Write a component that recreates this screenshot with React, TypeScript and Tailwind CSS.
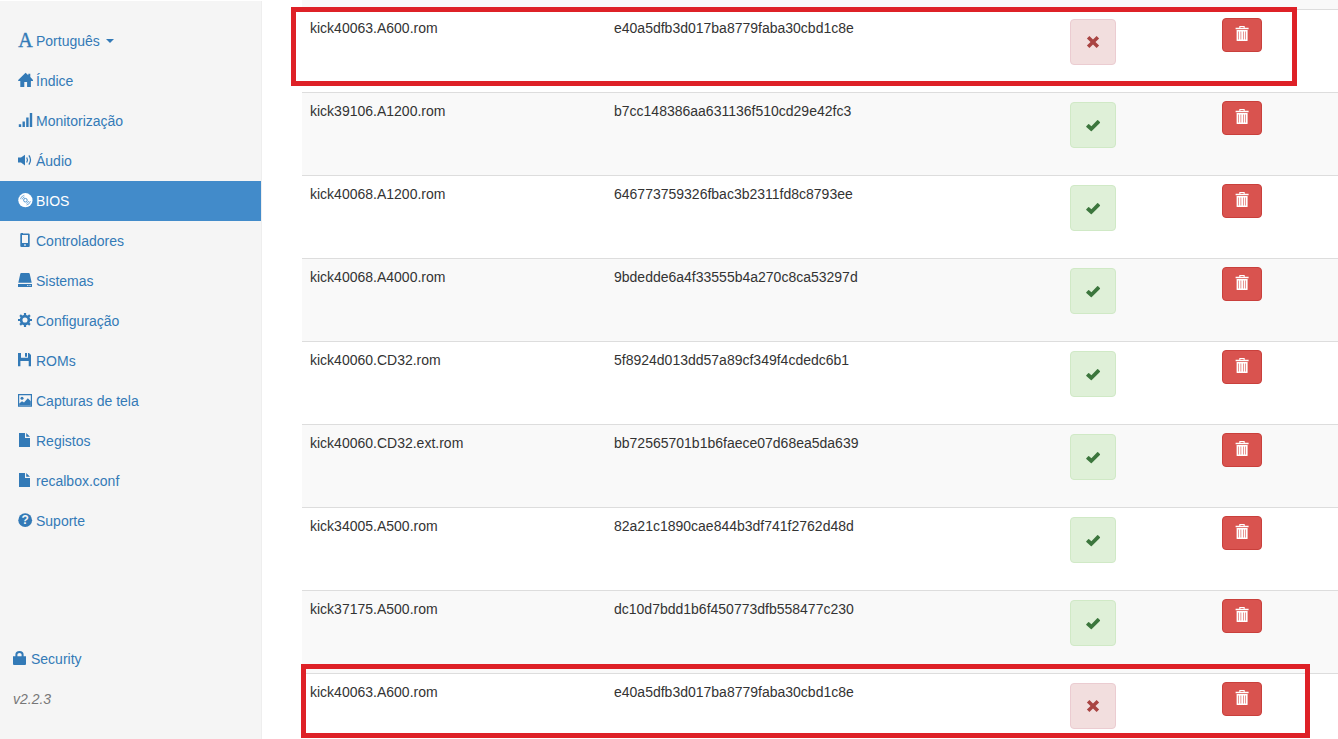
import type { ReactNode } from 'react'

interface NavItem {
  label: string
  icon: ReactNode
  active?: boolean
  caret?: boolean
}

interface Bios {
  name: string
  md5: string
  valid: boolean
}

function Icon({ children }: { children: ReactNode }) {
  return (
    <svg viewBox="0 0 14 14" className="h-3.5 w-3.5 shrink-0 overflow-visible" fill="currentColor" aria-hidden="true">
      {children}
    </svg>
  )
}

const fileIcon = (
  <Icon>
    <path d="M1 0h6v5H12v9H1zM8.2 0 12 3.8H8.2z" />
  </Icon>
)

const NAV: NavItem[] = [
  {
    label: 'Português',
    caret: true,
    icon: (
      <Icon>
        <text x="7.4" y="13.6" textAnchor="middle" stroke="currentColor" strokeWidth="0.4" className="font-['Liberation_Serif',serif] text-[20px]">A</text>
      </Icon>
    ),
  },
  {
    label: 'Índice',
    icon: <Icon><path d="M7.6-.3 10.3 2.2V.7h2v3.4l2.7 3v.8h-2.1V14H9.1V9H6.3v5H2.3V7.9H.2v-.8z" /></Icon>,
  },
  {
    label: 'Monitorização',
    icon: <Icon><path d="M.8 11.2h2.4V14H.8zM4.5 8.5h2.4V14H4.5zM8.2 4.5h2.4V14H8.2zM11.8 0h2.4v14h-2.4z" /></Icon>,
  },
  {
    label: 'Áudio',
    icon: (
      <Icon>
        <path d="M0 4.5h3L7 1.8v10.8L3 9.6H0z" />
        <path d="M8.7 4.5q1.6 2.5 0 5M10.9 2.4q3.2 4.6 0 9.2" fill="none" stroke="currentColor" strokeWidth="1.3" />
      </Icon>
    ),
  },
  {
    label: 'BIOS',
    active: true,
    icon: (
      <Icon>
        <circle cx="7.4" cy="7.2" r="7.1" />
        <circle cx="7.4" cy="7.2" r="1.8" fill="none" stroke="#428bca" strokeWidth="0.9" />
        <path d="M2.4 6.2A5.2 5.2 0 0 1 6.3 2.3M4.1 6.4A3.5 3.5 0 0 1 6.5 4M12.4 8.2a5.2 5.2 0 0 1-3.9 3.9M10.7 8a3.5 3.5 0 0 1-2.4 2.4" fill="none" stroke="#428bca" strokeWidth="0.7" />
      </Icon>
    ),
  },
  {
    label: 'Controladores',
    icon: <Icon><path fillRule="evenodd" d="M3.4 0H5v.4h5.6q1.1 0 1.1 1.1V13q0 1.1-1.1 1.1H3.4q-1.1 0-1.1-1.1V1q0-1 1.1-1zM4 2v8h6V2zM6.2 11.3v1.4h1.6v-1.4z" /></Icon>,
  },
  {
    label: 'Sistemas',
    icon: <Icon><path fillRule="evenodd" d="M3.2 0h7.6q.7 0 .9.7l2 9.1H.3L2.3.7Q2.5 0 3.2 0zM0 10.9h14V14H0zM9 12v.8h1.4V12zM11.4 12v.8h1.4V12z" /></Icon>,
  },
  {
    label: 'Configuração',
    icon: (
      <Icon>
        <circle cx="7" cy="7" r="3.9" fill="none" stroke="currentColor" strokeWidth="2.7" />
        <path d="M7 0v3M7 11v3M0 7h3M11 7h3M2.1 2.1l2 2M9.9 9.9l2 2M2.1 11.9l2-2M9.9 4.1l2-2" fill="none" stroke="currentColor" strokeWidth="2.2" />
      </Icon>
    ),
  },
  {
    label: 'ROMs',
    icon: <Icon><path fillRule="evenodd" d="M0 0h3v4.8h7V0h1l2 2v11.3h-2.3V8H2.4v5.3H0zM7 0h2v3.8H7z" /></Icon>,
  },
  {
    label: 'Capturas de tela',
    icon: (
      <Icon>
        <path fillRule="evenodd" d="M0 1h14v12.7H0zM1.2 2.2v10.3h11.6V2.2z" />
        <circle cx="4" cy="5.3" r="1.5" />
        <path d="M1.2 12.5v-2L4 8.3l2 1.2 3.8-4.3 3 3.1v4.2z" />
      </Icon>
    ),
  },
  { label: 'Registos', icon: fileIcon },
  { label: 'recalbox.conf', icon: fileIcon },
  {
    label: 'Suporte',
    icon: (
      <Icon>
        <circle cx="7.2" cy="7.2" r="6.9" />
        <text x="7.2" y="11.3" textAnchor="middle" fill="#f5f5f5" className="font-['Liberation_Sans',sans-serif] text-[12px] font-bold">?</text>
      </Icon>
    ),
  },
]

const BIOS_LIST: Bios[] = [
  { name: 'kick40063.A600.rom', md5: 'e40a5dfb3d017ba8779faba30cbd1c8e', valid: false },
  { name: 'kick39106.A1200.rom', md5: 'b7cc148386aa631136f510cd29e42fc3', valid: true },
  { name: 'kick40068.A1200.rom', md5: '646773759326fbac3b2311fd8c8793ee', valid: true },
  { name: 'kick40068.A4000.rom', md5: '9bdedde6a4f33555b4a270c8ca53297d', valid: true },
  { name: 'kick40060.CD32.rom', md5: '5f8924d013dd57a89cf349f4cdedc6b1', valid: true },
  { name: 'kick40060.CD32.ext.rom', md5: 'bb72565701b1b6faece07d68ea5da639', valid: true },
  { name: 'kick34005.A500.rom', md5: '82a21c1890cae844b3df741f2762d48d', valid: true },
  { name: 'kick37175.A500.rom', md5: 'dc10d7bdd1b6f450773dfb558477c230', valid: true },
  { name: 'kick40063.A600.rom', md5: 'e40a5dfb3d017ba8779faba30cbd1c8e', valid: false },
]

function Sidebar() {
  return (
    <aside className="mt-px w-[262px] shrink-0 border-r border-[#eeeeee] bg-[#f5f5f5] pt-5">
      <nav>
        <ul>
          {NAV.map(item => (
            <li key={item.label}>
              <a
                href="#"
                className={`flex h-10 items-center gap-1 px-[18px] ${item.active ? 'bg-[#428bca] text-white' : 'text-[#337ab7]'}`}
              >
                <span className="mb-0.5">{item.icon}</span>
                {item.label}
                {item.caret && <span className="ml-0.5 border-x-4 border-t-4 border-x-transparent border-t-current" />}
              </a>
            </li>
          ))}
        </ul>
      </nav>
      <div className="mt-[98px] px-[13px]">
        <a href="#" className="flex h-10 items-center gap-1 text-[#337ab7]">
          <span className="mb-0.5">
            <Icon>
              <path d="M0 5.3h13V13q0 1-1 1H1q-1 0-1-1z" />
              <path d="M3.4 6V3.6Q3.4.9 6.5.9t3.1 2.7V6" fill="none" stroke="currentColor" strokeWidth="2" />
            </Icon>
          </span>
          Security
        </a>
        <p className="flex h-10 items-center italic text-[#777777]">v2.2.3</p>
      </div>
    </aside>
  )
}

function StatusBadge({ valid }: { valid: boolean }) {
  return (
    <div
      role="img"
      aria-label={valid ? 'OK' : 'KO'}
      className={`flex h-[46px] w-[46px] items-center justify-center rounded border ${valid ? 'border-[#d0e9c6] bg-[#dff0d8] text-[#3c763d]' : 'border-[#ebccd1] bg-[#f2dede] text-[#a94442]'}`}
    >
      <Icon>
        {valid
          ? <path d="M.3 8.3 2.2 6.3q.4-.4.9 0l2.3 2 5.8-6q.4-.4.9 0l1.8 1.7q.4.4 0 .9L5.8 13q-.5.4-1 0L.3 9.1q-.4-.4 0-.8z" />
          : <path d="M3.4.9 7 4.5 10.6.9l2.5 2.5L9.5 7l3.6 3.6-2.5 2.5L7 9.5l-3.6 3.6L.9 10.6 4.5 7 .9 3.4z" />}
      </Icon>
    </div>
  )
}

function DeleteButton({ name }: { name: string }) {
  return (
    <button
      type="button"
      aria-label={`Apagar ${name}`}
      className="flex h-[34px] w-10 items-center justify-center rounded border border-[#c9403c] bg-[#d9534f] pb-1 text-white"
    >
      <Icon>
        <path fillRule="evenodd" d="M4.3 0h5.4v1.8H13.6v1.4H.6V1.8h3.7zM5.4.9v.9h3.2V.9zM1.6 4h11v10.4q0 .6-.6.6H2.2q-.6 0-.6-.6zM3.2 5.4v8h.6v-8zM5.6 5.4v8h.6v-8zM8 5.4v8h.6v-8zM10.4 5.4v8h.6v-8z" />
      </Icon>
    </button>
  )
}

export default function App() {
  return (
    <div className="flex h-screen overflow-hidden bg-white font-['Liberation_Sans',Arial,sans-serif] text-sm leading-5 text-[#333333]">
      <Sidebar />
      <main className="relative min-w-0 flex-1 pl-10">
        {/* end of the row scrolled out above */}
        <div className="h-[9px] bg-[#f9f9f9]" />
        <table className="w-full table-fixed">
          <colgroup>
            <col className="w-[304px]" />
            <col className="w-[456px]" />
            <col className="w-[152px]" />
            <col />
          </colgroup>
          <tbody>
            {BIOS_LIST.map((bios, i) => (
              <tr key={i} className="h-[83px] align-top even:bg-[#f9f9f9]">
                <td className="border-t border-[#dddddd] p-2">{bios.name}</td>
                <td className="border-t border-[#dddddd] p-2">{bios.md5}</td>
                <td className="border-t border-[#dddddd] px-2 pt-[9px]"><StatusBadge valid={bios.valid} /></td>
                <td className="border-t border-[#dddddd] p-2"><DeleteButton name={bios.name} /></td>
              </tr>
            ))}
          </tbody>
        </table>
        {/* highlight frames over the two invalid entries */}
        <div className="pointer-events-none absolute top-[7px] right-[41px] left-[29px] h-[79px] border-5 border-[#de2127]" />
        <div className="pointer-events-none absolute top-[664px] right-7 left-[39px] h-[74px] border-5 border-[#de2127]" />
      </main>
    </div>
  )
}
